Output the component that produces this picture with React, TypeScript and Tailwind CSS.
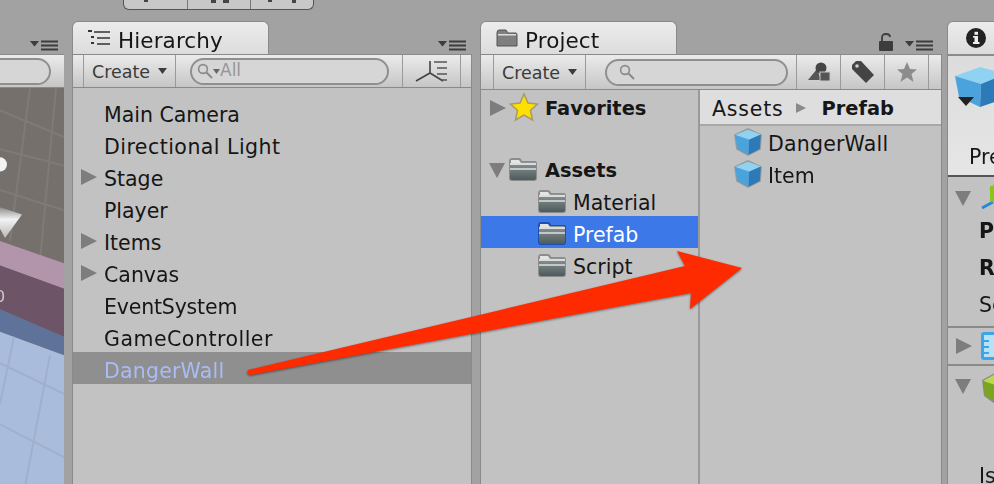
import React from "react";

const FONT = "font-['DejaVu_Sans',sans-serif]";

function Tri({ down = false, className = "" }: { down?: boolean; className?: string }) {
  return (
    <svg width="16" height="16" viewBox="0 0 16 16" className={`shrink-0 ${className}`}>
      {down ? <path d="M0 1 H16 L8 16 Z" fill="#7d7d7d" /> : <path d="M0 0 L16 8 L0 16 Z" fill="#7d7d7d" />}
    </svg>
  );
}

function PaneMenu() {
  return (
    <svg width="28" height="11" viewBox="0 0 28 11">
      <path d="M0 1 H9 L4.5 6.5 Z" fill="#3c3c3c" />
      <path d="M11 1.5 H28 M11 5.5 H28 M11 9.5 H28" stroke="#3c3c3c" strokeWidth="1.8" />
    </svg>
  );
}

function Folder({ selected = false }: { selected?: boolean }) {
  const id = selected ? "fs" : "fn";
  return (
    <svg width="30" height="25" viewBox="0 0 30 25" className="mt-[2px]">
      <defs>
        <linearGradient id={id} x1="0" y1="0" x2="0" y2="1">
          <stop offset="0" stopColor="#8d9696" />
          <stop offset="1" stopColor="#4e5a5c" />
        </linearGradient>
      </defs>
      <path d="M1 5 Q1 1 4 1 H11 Q13 1 14 4 H27 Q29 4 29 7 V21 Q29 24 26 24 H4 Q1 24 1 21 Z" fill={selected ? "#1d4fb0" : "#8c8c8c"} />
      <rect x="2" y="5" width="26" height="18" rx="2" fill={`url(#${id})`} />
      <path d="M3 3 H11 L13 6 H3 Z" fill="#e4e4e4" />
      <rect x="2" y="6" width="26" height="2" fill="#dcdcdc" />
      <rect x="2" y="11" width="26" height="2" fill="#c2c8c8" />
    </svg>
  );
}

function Cube() {
  return (
    <svg width="30" height="30" viewBox="0 0 28 28">
      <path d="M1 7 L14 1 L27 7 L26 21 L14 27 L3 21 Z" fill="#9a9a9a" />
      <path d="M2 7.5 L14 2.5 L26 7 L15 12 Z" fill="#8fd2f2" />
      <path d="M2 7.5 L15 12 L14.5 26 L4 20.5 Z" fill="#4aa3dd" />
      <path d="M15 12 L26 7 L25 20.5 L14.5 26 Z" fill="#2c7ab8" />
    </svg>
  );
}

function Search({ className = "" }: { className?: string }) {
  return (
    <svg width="16" height="16" viewBox="0 0 16 16" className={className}>
      <circle cx="6" cy="6" r="4.4" fill="none" stroke="#8a8a8a" strokeWidth="1.6" />
      <path d="M9.5 9.5 L15 15" stroke="#8a8a8a" strokeWidth="2" />
    </svg>
  );
}

function Row({ label, arrow, selected, className = "" }: { label: string; arrow?: boolean; selected?: boolean; className?: string }) {
  return (
    <div className={`flex h-8 items-center ${selected ? "bg-[#8f8f8f] text-[#a9bcf5]" : "text-[#161616]"}`}>
      <div className="flex w-[31px] shrink-0 justify-end pr-[7px] pt-[2px]">{arrow && <Tri />}</div>
      <span className={`pt-[6px] ${className}`}>{label}</span>
    </div>
  );
}

function Tab({ icon, label }: { icon: React.ReactNode; label: string }) {
  return (
    <div className="flex h-[33px] w-[197px] items-center gap-[7px] rounded-t-[6px] border border-b-0 border-[#8a8a8a] bg-gradient-to-b from-[#ececec] to-[#dcdcdc] pl-[15px] text-[21.5px] tracking-[0.1px] text-[#161616]">
      {icon}
      <span className="pt-[6px] leading-none">{label}</span>
    </div>
  );
}

const cell = "flex items-center justify-center border-r border-[#9a9a9a]";

function CreateBtn({ w }: { w: number }) {
  return (
    <div className={`${cell} gap-[8px] text-[17.5px] text-[#3a3a3a]`} style={{ width: w }}>
      <span className="pt-[2px]">Create</span>
      <svg width="9" height="6" viewBox="0 0 9 6"><path d="M0 0 H9 L4.5 6 Z" fill="#3c3c3c" /></svg>
    </div>
  );
}

function SceneView() {
  return (
    <svg className="block h-full w-full" viewBox="0 0 64 396" preserveAspectRatio="none">
      <defs>
        <linearGradient id="cone" x1="0" y1="0" x2="0" y2="1">
          <stop offset="0" stopColor="#8d8d8d" />
          <stop offset="0.4" stopColor="#f2f2f2" />
          <stop offset="1" stopColor="#b8b8b8" />
        </linearGradient>
      </defs>
      <rect width="64" height="396" fill="#76706c" />
      <path d="M0 22 L64 48 M0 60 L64 76 M30 0 L10 150 M56 0 L40 170 M0 100 L64 120" stroke="#7e7b77" strokeWidth="2" />
      <circle cx="0" cy="75" r="7" fill="#f3f3f3" />
      <path d="M0 117 L22 124 L5 147 L0 138 Z" fill="url(#cone)" />
      <path d="M0 150 L64 172 V197 L0 174 Z" fill="#b295ab" />
      <path d="M0 174 L64 197 V244 L0 217 Z" fill="#6d5567" />
      <path d="M0 217 L64 244 V262 L0 239 Z" fill="#5f729a" />
      <path d="M0 239 L64 262 V396 H0 Z" fill="#aabcdc" />
      <path d="M0 270 L64 300 M0 330 L64 362 M14 244 L0 310 M50 262 L24 396" stroke="#9fb0cf" strokeWidth="2" />
      <text x="-5" y="210" fontSize="16" fill="#cfc6cf" fontFamily="DejaVu Sans">0</text>
    </svg>
  );
}

function Inspector() {
  return (
    <div className="ml-[-3px] flex min-w-0 flex-1 flex-col overflow-hidden">
      <div className="flex h-[33px] w-[120px] shrink-0 items-center rounded-t-[6px] border border-b-0 border-[#8a8a8a] bg-gradient-to-b from-[#ececec] to-[#dcdcdc] pl-[18px]">
        <svg width="20" height="20" viewBox="0 0 20 20">
          <circle cx="10" cy="10" r="10" fill="#222" />
          <rect x="8.5" y="8" width="3.5" height="7.5" fill="#eee" />
          <rect x="7" y="14" width="6.5" height="2" fill="#eee" />
          <rect x="7" y="8" width="3" height="1.6" fill="#eee" />
          <rect x="8.5" y="3.8" width="3.5" height="3" fill="#eee" />
        </svg>
      </div>
      <div className="flex flex-1 flex-col border-l border-[#8a8a8a] bg-[#c2c2c2] text-[20.5px] text-[#161616]">
        <div className="flex h-[123px] shrink-0 flex-col border-y-2 border-t-[#8a8a8a] border-b-[#555] bg-gradient-to-b from-[#dcdcdc] to-[#e6e6e6] pl-[6px] pt-[10px]">
          <svg width="50" height="42" viewBox="0 0 50 42" className="shrink-0">
            <path d="M1 10 L26 1 L52 8 L27 18 Z" fill="#8fd2f2" />
            <path d="M1 10 L27 18 L26 41 L5 31 Z" fill="#4aa3dd" />
            <path d="M27 18 L52 8 L52 32 L26 41 Z" fill="#2c7ab8" />
            <path d="M4 31 H20 L12 40 Z" fill="#222" />
          </svg>
          <span className="ml-[15px] mt-[34px] whitespace-nowrap">Prefab</span>
        </div>
        <div className="flex h-[151px] shrink-0 flex-col border-b-2 border-[#8a8a8a]">
          <div className="flex h-[36px] shrink-0 items-start pl-[7px] pt-[13px]">
            <Tri down className="mr-[10px]" />
            <svg width="22" height="26" viewBox="0 0 22 26" className="mt-[-6px] shrink-0">
              <path d="M1 24 L12 18" stroke="#2a86d8" strokeWidth="3" />
              <path d="M11 18 V2" stroke="#8ac420" strokeWidth="4" />
              <path d="M8 6 L13 0 L18 6 Z" fill="#8ac420" />
            </svg>
          </div>
          <div className="flex flex-col gap-[6px] whitespace-nowrap pl-[31px] pt-[3px]">
            <span className="font-bold">Position</span>
            <span className="font-bold">Rotation</span>
            <span>Scale</span>
          </div>
        </div>
        <div className="flex h-[38px] shrink-0 items-center gap-[9px] border-b-2 border-[#8a8a8a] pl-[8px]">
          <Tri />
          <svg width="26" height="28" viewBox="0 0 26 28" className="shrink-0">
            <rect width="26" height="28" rx="3" fill="#3aa5e8" />
            <rect x="3" y="3" width="20" height="22" fill="#b9e1f6" />
            <path d="M3 9 H8 M3 15 H8 M3 21 H8" stroke="#3aa5e8" strokeWidth="2" />
          </svg>
        </div>
        <div className="flex flex-1 flex-col">
          <div className="flex h-[38px] shrink-0 items-start pl-[7px] pt-[12px]">
            <Tri down className="mr-[10px]" />
            <svg width="30" height="34" viewBox="0 0 30 34" className="mt-[-8px] shrink-0">
              <path d="M1 10 L16 2 L30 8 V34 H14 L3 26 Z" fill="#8a8a8a" />
              <path d="M2 11 L16 3 L30 9 L17 16 Z" fill="#b6dc4c" />
              <path d="M2 11 L17 16 V33 L4 26 Z" fill="#7ba51f" />
              <path d="M17 16 L30 9 V33 H17 Z" fill="#5e8218" />
            </svg>
          </div>
          <span className="ml-[31px] mt-[57px] whitespace-nowrap">Is Trigger</span>
        </div>
      </div>
    </div>
  );
}

export default function App() {
  return (
    <div className="h-[484px] w-[994px] overflow-hidden">
      <div className={`relative flex h-[484px] w-[994px] flex-col bg-[#a2a2a2] blur-[0.5px] ${FONT}`}>
        <div className="h-[21px] shrink-0">
          <div className="ml-[123px] flex h-[10px] w-[191px] rounded-b-[6px] border border-t-0 border-[#555] bg-[#c8c8c8]">
            <div className="flex w-[64px] items-start justify-start border-r border-[#777] pl-[20px]"><div className="h-[2px] w-[4px] bg-[#444]" /></div>
            <div className="flex w-[63px] items-start justify-start gap-[7px] border-r border-[#777] pl-[23px]"><div className="h-[3px] w-[5px] bg-[#444]" /><div className="h-[3px] w-[6px] bg-[#444]" /></div>
            <div className="flex items-start justify-start gap-[20px] pl-[17px]"><div className="h-[2px] w-[4px] bg-[#444]" /><div className="h-[3px] w-[4px] bg-[#444]" /></div>
          </div>
        </div>
        <div className="flex flex-1 gap-[8px]">
          {/* Scene */}
          <div className="flex w-[64px] shrink-0 flex-col">
            <div className="flex h-[33px] items-end justify-end pb-[3px] pr-[6px]"><PaneMenu /></div>
            <div className="flex h-[34px] items-center border-y border-[#8a8a8a] bg-gradient-to-b from-[#ebebeb] to-[#c6c6c6]">
              <div className="ml-[-20px] h-[27px] w-[71px] rounded-full border-2 border-[#8f8f8f] bg-[#d6d6d6]" />
            </div>
            <div className="flex-1"><SceneView /></div>
          </div>

          {/* Hierarchy */}
          <div className="flex w-[400px] shrink-0 flex-col">
            <div className="flex items-end justify-between pr-[6px]">
              <Tab
                label="Hierarchy"
                icon={
                  <svg width="23" height="16" viewBox="0 0 23 16">
                    <path d="M0 1 H4 M3 7 H6 M3 13 H6" stroke="#333" strokeWidth="2" />
                    <path d="M6 2 H22 M9 8 H22 M9 14 H22" stroke="#333" strokeWidth="1.6" />
                  </svg>
                }
              />
              <div className="pb-[3px]"><PaneMenu /></div>
            </div>
            <div className="flex flex-1 flex-col border-x border-[#8a8a8a] bg-[#c2c2c2]">
              <div className="flex h-[34px] items-stretch border-y border-[#8a8a8a] bg-gradient-to-b from-[#ebebeb] to-[#c6c6c6]">
                <div className={`${cell} w-[11px]`} />
                <CreateBtn w={92} />
                <div className={`${cell} flex-1 justify-start pl-[14px]`}>
                  <div className="flex h-[27px] w-[199px] items-center rounded-full border-2 border-[#8f8f8f] bg-[#d6d6d6] pl-[5px] text-[17px] text-[#969696]">
                    <Search />
                    <svg width="7" height="5" viewBox="0 0 7 5"><path d="M0 0 H7 L3.5 5 Z" fill="#666" /></svg>
                    <span>All</span>
                  </div>
                </div>
                <div className={`${cell} w-[58px]`}>
                  <svg width="34" height="22" viewBox="0 0 34 22">
                    <path d="M1 21 L15 13 L28 21 M15 13 V1" fill="none" stroke="#444" strokeWidth="1.6" />
                    <path d="M19 2 H32 M22 8 H32 M22 14 H32 M27 20 H32" stroke="#555" strokeWidth="1.6" />
                  </svg>
                </div>
                <div className="w-[10px]" />
              </div>
              <div className="pt-[8px] text-[20.5px]">
                <Row label="Main Camera" />
                <Row label="Directional Light" className="tracking-[0.47px]" />
                <Row label="Stage" arrow />
                <Row label="Player" />
                <Row label="Items" arrow />
                <Row label="Canvas" arrow />
                <Row label="EventSystem" className="tracking-[-0.18px]" />
                <Row label="GameController" className="tracking-[0.5px]" />
                <Row label="DangerWall" selected className="tracking-[0.2px]" />
              </div>
            </div>
          </div>

          {/* Project */}
          <div className="flex w-[462px] shrink-0 flex-col">
            <div className="flex items-end justify-between pr-[9px]">
              <Tab
                label="Project"
                icon={
                  <svg width="22" height="18" viewBox="0 0 22 18">
                    <path d="M1 4 Q1 1 3 1 H10 L12 4 H20 Q21 4 21 6 V17 H1 Z" fill="#7f7f7f" stroke="#555" />
                    <rect x="2" y="5" width="18" height="1.5" fill="#ddd" />
                  </svg>
                }
              />
              <div className="flex items-end gap-[12px] pb-[3px]">
                <svg width="14" height="18" viewBox="0 0 14 18">
                  <path d="M3 8 V4.5 Q3 1 7 1 Q11 1 11 4" fill="none" stroke="#3c3c3c" strokeWidth="1.8" />
                  <rect x="0" y="8" width="14" height="10" rx="1" fill="#3c3c3c" />
                </svg>
                <PaneMenu />
              </div>
            </div>
            <div className="flex flex-1 flex-col border-x border-[#8a8a8a] bg-[#c2c2c2]">
              <div className="flex h-[36px] items-stretch border-y border-[#8a8a8a] bg-gradient-to-b from-[#ebebeb] to-[#c6c6c6]">
                <div className={`${cell} w-[13px]`} />
                <CreateBtn w={92} />
                <div className={`${cell} flex-1 justify-start pl-[19px]`}>
                  <div className="flex h-[27px] w-[183px] items-center rounded-full border-2 border-[#8f8f8f] bg-[#d6d6d6] pl-[12px]">
                    <Search />
                  </div>
                </div>
                <div className={`${cell} w-[44px]`}>
                  <svg width="24" height="22" viewBox="0 0 24 22">
                    <path d="M1 19 L10 8 L14 19 Z" fill="#555" />
                    <circle cx="14" cy="7" r="5.5" fill="#444" />
                    <rect x="13" y="11" width="10" height="9" fill="#555" stroke="#c8c8c8" />
                  </svg>
                </div>
                <div className={`${cell} w-[44px]`}>
                  <svg width="24" height="24" viewBox="0 0 24 24">
                    <path d="M1 5 L5 1 H10 L23 15 L15 23 L1 9 Z" fill="#444" />
                    <circle cx="6" cy="6" r="1.8" fill="#d0d0d0" />
                  </svg>
                </div>
                <div className={`${cell} w-[44px]`}>
                  <svg width="22" height="22" viewBox="0 0 22 22">
                    <path d="M11 1 L14 8 L21 8.5 L15.5 13 L17.5 21 L11 16.5 L4.5 21 L6.5 13 L1 8.5 L8 8 Z" fill="#8c8c8c" />
                  </svg>
                </div>
                <div className="w-[12px]" />
              </div>
              <div className="flex flex-1">
                <div className="w-[219px] shrink-0 border-r-2 border-[#9a9a9a] text-[20.5px] text-[#161616]">
                  <div className="flex h-[36px] items-center pl-[9px] text-[19.4px] font-bold">
                    <Tri className="mr-[3px]" />
                    <svg width="30" height="30" viewBox="0 0 30 30" className="mb-[3px] mr-[6px]">
                      <path d="M15 2 L19 11 L28.5 12 L21.5 18.5 L23.5 28 L15 23 L6.5 28 L8.5 18.5 L1.5 12 L11 11 Z" fill="#fde000" stroke="#a49a6c" strokeWidth="1.5" />
                    </svg>
                    <span className="pt-[2px]">Favorites</span>
                  </div>
                  <div className="h-[26px]" />
                  <div className="flex h-8 items-center pl-[8px] text-[19.4px] font-bold">
                    <Tri down className="mr-[3px] mt-[4px]" />
                    <div className="mr-[7px] flex"><Folder /></div>
                    <span className="pt-[6px]">Assets</span>
                  </div>
                  <div className="flex h-8 items-center gap-[6px] pl-[56px]"><Folder /><span className="pt-[6px]">Material</span></div>
                  <div className="flex h-8 items-center gap-[6px] bg-[#3c78e8] pl-[56px] text-white"><Folder selected /><span className="pt-[6px]">Prefab</span></div>
                  <div className="flex h-8 items-center gap-[6px] pl-[56px]"><Folder /><span className="pt-[6px]">Script</span></div>
                </div>
                <div className="flex-1 text-[20.5px] text-[#161616]">
                  <div className="flex h-[36px] items-center border-b-2 border-[#a8a8a8] bg-[#dedede] pl-[12px]">
                    <span className="mr-[12px] pt-[4px] tracking-[0.8px]">Assets</span>
                    <svg width="10" height="10" viewBox="0 0 10 10" className="mr-[16px] mt-[2px]"><path d="M0 0 L10 5 L0 10 Z" fill="#8a8a8a" /></svg>
                    <span className="pt-[4px] text-[19.4px] font-bold">Prefab</span>
                  </div>
                  <div className="flex h-8 items-center gap-[4px] pl-[33px] tracking-[0.2px]"><Cube /><span className="pt-[5px] pl-[1px]">DangerWall</span></div>
                  <div className="flex h-8 items-center gap-[4px] pl-[33px]"><Cube /><span className="pt-[5px] pl-[1px]">Item</span></div>
                </div>
              </div>
            </div>
          </div>

          <Inspector />
        </div>
        <svg className="pointer-events-none absolute left-0 top-0 drop-shadow-[0_1px_1px_rgba(0,0,0,0.45)]" width="994" height="484" viewBox="0 0 994 484">
          <path d="M248 370 L685 266 L677 251 L742 268 L690 309 L691 293 L250 375 Q246 374 248 370 Z" fill="#ff2b00" />
        </svg>
      </div>
    </div>
  );
}
